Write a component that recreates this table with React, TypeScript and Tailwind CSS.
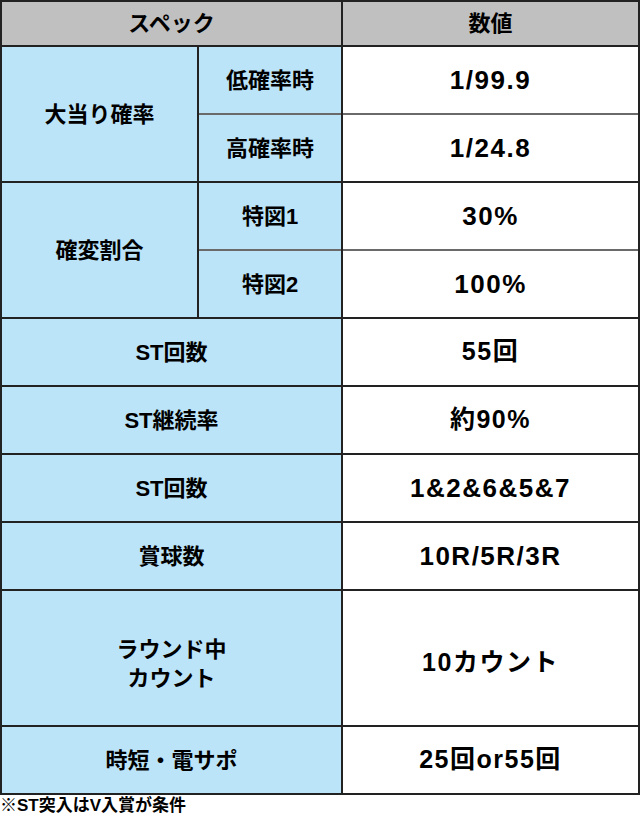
import React from 'react';

const LINE = 'bg-[#222]';
const HEAD = 'bg-[#c0c0c0]';
const BLUE = 'bg-[#bce4f8]';

const cell = 'flex items-center justify-center text-center';
const num = 'bg-white text-[26px] tracking-[1.5px]';
const mixed = 'bg-white text-[25px] tracking-[1.5px]';

const App = () => {
  return (
    <div className="w-[640px] h-[817px] bg-white text-black font-bold font-['Liberation_Sans','Noto_Sans_CJK_JP',sans-serif]">
      <div
        className={`grid w-[640px] gap-[2px] p-[2px] ${LINE} grid-cols-[195px_142px_295px] grid-rows-[43px_66px_66px_66px_66px_66px_66px_66px_66px_134px_66px]`}
      >
        {/* header */}
        <div className={`${cell} ${HEAD} col-span-2 text-[22px]`}>スペック</div>
        <div className={`${cell} ${HEAD} text-[22px]`}>数値</div>

        {/* 大当り確率 */}
        <div className={`${cell} ${BLUE} row-span-2 text-[22px]`}>大当り確率</div>
        <div className={`${cell} ${BLUE} h-[68px] border-b-2 border-[#6a6a6a] text-[22px]`}>低確率時</div>
        <div className={`${cell} ${num} h-[68px] border-b-2 border-[#6a6a6a]`}>1/99.9</div>
        <div className={`${cell} ${BLUE} text-[22px]`}>高確率時</div>
        <div className={`${cell} ${num}`}>1/24.8</div>

        {/* 確変割合 */}
        <div className={`${cell} ${BLUE} row-span-2 text-[22px]`}>確変割合</div>
        <div className={`${cell} ${BLUE} h-[68px] border-b-2 border-[#6a6a6a] text-[22px]`}>特図1</div>
        <div className={`${cell} ${num} h-[68px] border-b-2 border-[#6a6a6a]`}>30%</div>
        <div className={`${cell} ${BLUE} text-[22px]`}>特図2</div>
        <div className={`${cell} ${num}`}>100%</div>

        <div className={`${cell} ${BLUE} col-span-2 text-[22px]`}>ST回数</div>
        <div className={`${cell} ${mixed}`}>55回</div>

        <div className={`${cell} ${BLUE} col-span-2 text-[22px]`}>ST継続率</div>
        <div className={`${cell} ${mixed}`}>約90%</div>

        <div className={`${cell} ${BLUE} col-span-2 text-[22px]`}>ST回数</div>
        <div className={`${cell} ${num}`}>1&amp;2&amp;6&amp;5&amp;7</div>

        <div className={`${cell} ${BLUE} col-span-2 text-[22px]`}>賞球数</div>
        <div className={`${cell} ${num}`}>10R/5R/3R</div>

        <div className={`${cell} ${BLUE} col-span-2 text-[22px] leading-[29px] pt-[12px]`}>
          ラウンド中
          <br />
          カウント
        </div>
        <div className={`${cell} ${mixed} pt-[10px]`}>10カウント</div>

        <div className={`${cell} ${BLUE} col-span-2 text-[22px]`}>時短・電サポ</div>
        <div className={`${cell} ${mixed}`}>25回or55回</div>
      </div>
      <p className="text-[17px] leading-[22px]">※ST突入はV入賞が条件</p>
    </div>
  );
};

export default App;
